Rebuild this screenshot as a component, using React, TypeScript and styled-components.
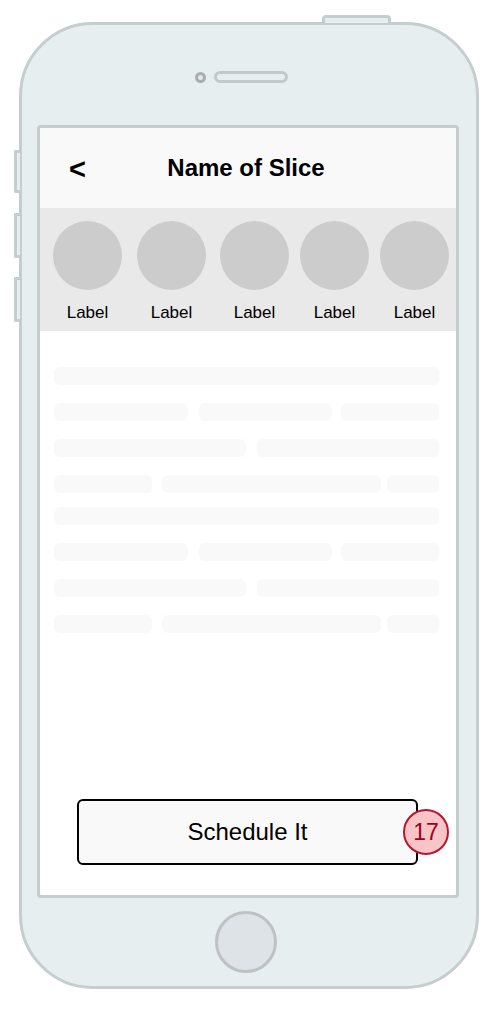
import React from 'react'
import styled, { createGlobalStyle } from 'styled-components'

const GlobalStyle = createGlobalStyle`
  html, body {
    margin: 0;
    padding: 0;
    background: #ffffff;
  }
  body {
    font-family: 'Liberation Sans', Arial, Helvetica, sans-serif;
    color: #000000;
  }
  * {
    box-sizing: border-box;
  }
`

const FRAME = '#c5cdcf'
const BODY = '#e6eef0'

const Page = styled.div`
  width: 498px;
  height: 1010px;
  padding: 22px 0 0 19px;
  overflow: hidden;
`

const Phone = styled.div`
  position: relative;
  width: 460px;
  height: 967px;
  border: 3px solid ${FRAME};
  border-radius: 74px;
  background: ${BODY};
  display: flex;
  flex-direction: column;
  padding-left: 15px;
`

const SideButton = styled.div<{ $top: number; $h: number }>`
  position: absolute;
  left: -8px;
  top: ${(p) => p.$top}px;
  width: 6px;
  height: ${(p) => p.$h}px;
  background: ${BODY};
  border: 3px solid ${FRAME};
  border-right: none;
  border-radius: 2px 0 0 2px;
`

const TopButton = styled.div`
  position: absolute;
  left: 300px;
  top: -10px;
  width: 69px;
  height: 8px;
  background: ${BODY};
  border: 3px solid ${FRAME};
  border-bottom: none;
  border-radius: 4px 4px 0 0;
`

const Earpiece = styled.div`
  height: 100px;
  width: 422px;
  display: flex;
  align-items: center;
  justify-content: center;
  gap: 8px;
  padding: 3px 0 0 0;
  margin-left: -7px;
`

const Camera = styled.div`
  width: 11px;
  height: 11px;
  margin-top: 2px;
  border-radius: 50%;
  border: 3px solid #a9adaf;
  background: #e3e8ea;
`

const Speaker = styled.div`
  width: 74px;
  height: 12px;
  border-radius: 6px;
  border: 3px solid #c2c9cb;
  background: ${BODY};
`

const Screen = styled.div`
  width: 422px;
  height: 773px;
  border: 3px solid ${FRAME};
  border-radius: 4px;
  background: #ffffff;
  display: flex;
  flex-direction: column;
`

const Header = styled.div`
  height: 80px;
  background: #f9f9f9;
  display: grid;
  grid-template-columns: 1fr auto 1fr;
  align-items: center;
`

const Back = styled.span`
  padding-left: 29px;
  font-size: 29px;
  font-weight: 700;
  line-height: 1;
  margin-top: 3px;
`

const Title = styled.h1`
  margin: 0;
  font-size: 24px;
  font-weight: 700;
  line-height: 1;
  transform: translateX(-2px);
`

const Band = styled.div`
  height: 123px;
  background: #e9e9e9;
  display: flex;
  padding-top: 13px;
`

const Slot = styled.div<{ $ml: number }>`
  width: 69px;
  margin-left: ${(p) => p.$ml}px;
  display: flex;
  flex-direction: column;
  align-items: center;
  gap: 13px;
`

const Avatar = styled.div`
  width: 69px;
  height: 69px;
  border-radius: 50%;
  background: #cccccc;
`

const Label = styled.span`
  font-size: 17px;
  line-height: 20px;
  white-space: nowrap;
`

const Lines = styled.div`
  display: flex;
  flex-direction: column;
  gap: 14px;
  padding: 36px 17px 0 14px;
`

const Group = styled.div`
  display: flex;
  flex-direction: column;
  gap: 18px;
`

const Line = styled.div`
  display: flex;
  height: 18px;
`

const Bar = styled.div<{ $w: number; $gap: number }>`
  width: ${(p) => p.$w}px;
  margin-left: ${(p) => p.$gap}px;
  height: 18px;
  border-radius: 6px;
  background: #f9f9f9;
`

const Footer = styled.div`
  margin-top: auto;
  padding: 0 0 30px 37px;
`

const ScheduleButton = styled.button`
  position: relative;
  width: 341px;
  height: 66px;
  border: 2px solid #000000;
  border-radius: 6px;
  background: #f9f9f9;
  font-family: inherit;
  font-size: 24px;
  color: #000000;
  padding: 0;
  cursor: pointer;
`

const Badge = styled.span`
  position: absolute;
  right: -33px;
  top: 50%;
  transform: translateY(-50%);
  width: 46px;
  height: 46px;
  border-radius: 50%;
  border: 2px solid #b5172c;
  background: #f8c4c8;
  color: #a0001a;
  font-size: 23px;
  display: flex;
  align-items: center;
  justify-content: center;
`

const HomeArea = styled.div`
  flex: 1;
  width: 422px;
  display: flex;
  align-items: center;
  justify-content: center;
`

const HomeButton = styled.div`
  width: 62px;
  height: 62px;
  border-radius: 50%;
  border: 3px solid #bec2c4;
  background: #dde3e6;
  margin-left: -4px;
`

// left offset of each avatar slot
const slots = [13, 15, 14, 11, 11]

// each bar: [width, gap before it]
const group: [number, number][][] = [
  [[385, 0]],
  [[134, 0], [133, 11], [98, 9]],
  [[192, 0], [182, 11]],
  [[98, 0], [219, 10], [52, 6]],
]

const App: React.FC = (): React.ReactElement => {
  return (
    <>
      <GlobalStyle />
      <Page>
        <Phone>
          <TopButton />
          <SideButton $top={125} $h={43} />
          <SideButton $top={188} $h={45} />
          <SideButton $top={252} $h={45} />
          <Earpiece>
            <Camera />
            <Speaker />
          </Earpiece>
          <Screen>
            <Header>
              <Back>&lt;</Back>
              <Title>Name of Slice</Title>
              <span />
            </Header>
            <Band>
              {slots.map((ml, i) => (
                <Slot key={i} $ml={ml}>
                  <Avatar />
                  <Label>Label</Label>
                </Slot>
              ))}
            </Band>
            <Lines>
              {[0, 1].map((g) => (
                <Group key={g}>
                  {group.map((row, i) => (
                    <Line key={i}>
                      {row.map(([w, gap], j) => (
                        <Bar key={j} $w={w} $gap={gap} />
                      ))}
                    </Line>
                  ))}
                </Group>
              ))}
            </Lines>
            <Footer>
              <ScheduleButton>
                Schedule It
                <Badge>17</Badge>
              </ScheduleButton>
            </Footer>
          </Screen>
          <HomeArea>
            <HomeButton />
          </HomeArea>
        </Phone>
      </Page>
    </>
  )
}

export default App
